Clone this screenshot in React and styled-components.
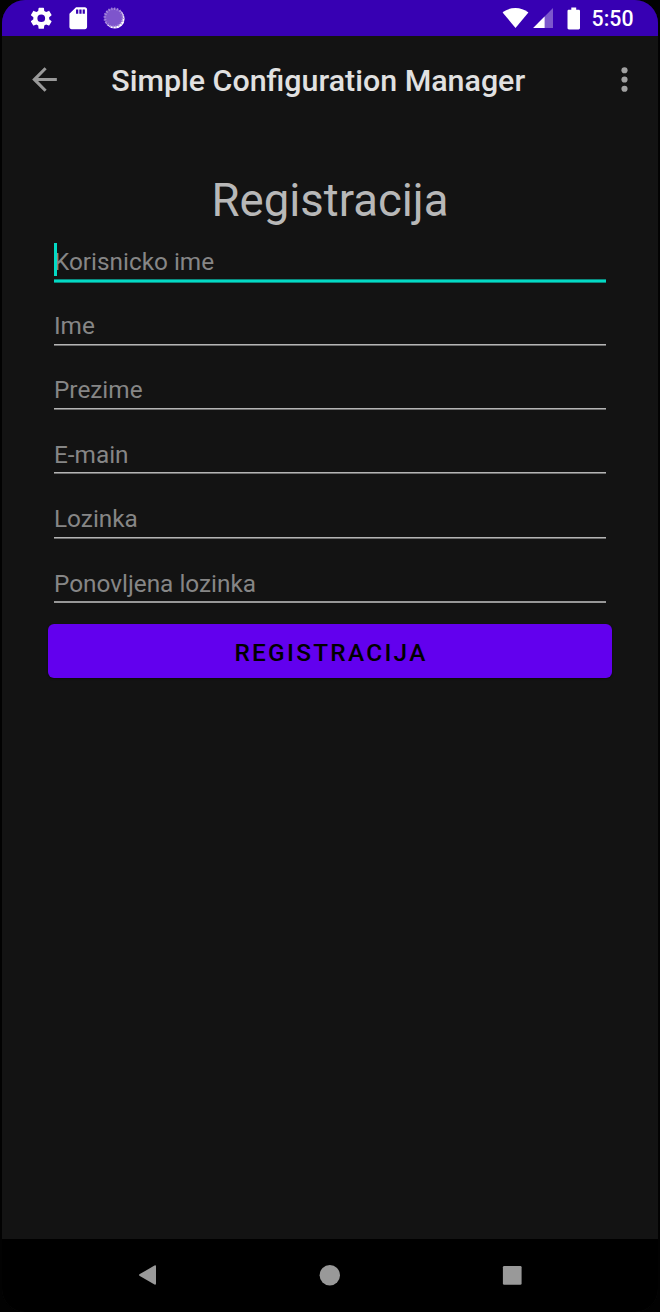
import React from 'react';
import styled, { createGlobalStyle } from 'styled-components';

const GlobalStyle = createGlobalStyle`
  * { box-sizing: border-box; }
  body {
    margin: 0;
    background: #020202;
    font-family: Roboto, "Liberation Sans", sans-serif;
  }
`;

const Device = styled.div`
  width: 656px;
  height: 1312px;
  margin: 0 auto;
  display: flex;
  flex-direction: column;
  overflow: hidden;
  border-radius: 23px;
  background: #131313;
`;

const StatusBar = styled.div`
  height: 36px;
  flex: none;
  display: flex;
  align-items: center;
  justify-content: space-between;
  padding: 0 24.5px 0 26px;
  background: #3700b3;
`;

const StatusGroup = styled.div`
  display: flex;
  align-items: center;
  height: 36px;
`;

const Icon = styled.svg`
  display: block;
  flex: none;
  margin-left: ${({ $gap }) => $gap || 0}px;
`;

const Clock = styled.span`
  margin-left: 11px;
  font-size: 21.3px;
  font-weight: 500;
  line-height: 36px;
  padding-top: 2px;
  color: #fff;
`;

const Toolbar = styled.header`
  height: 86px;
  flex: none;
  display: flex;
  align-items: center;
  padding: 0 15px 0 24px;
`;

const IconButton = styled.button`
  display: flex;
  padding: 0;
  border: 0;
  background: none;
`;

const AppTitle = styled.h1`
  flex: 1;
  margin: 0 0 0 48.3px;
  padding-top: 2px;
  font-size: 30.4px;
  font-weight: 500;
  line-height: 41px;
  color: #e1e1e1;
`;

const Form = styled.main`
  flex: 1;
  display: flex;
  flex-direction: column;
  padding: 52px 46px 0;
`;

const Heading = styled.h2`
  margin: 0 0 -0.3px;
  font-size: 45.5px;
  font-weight: 400;
  line-height: 53px;
  text-align: center;
  color: #b8b8b8;
`;

const Field = styled.label`
  position: relative;
  display: block;
  height: 64.37px;
  padding: 16px 6px 0;
`;

const Input = styled.input`
  display: block;
  width: 100%;
  height: 37px;
  padding: 0;
  border: 0;
  outline: 0;
  background: none;
  font-family: inherit;
  font-size: 24.35px;
  color: #b8b8b8;
  &::placeholder { color: #868686; opacity: 1; }
`;

const Underline = styled.div`
  height: ${({ $active }) => ($active ? 4 : 2)}px;
  margin-top: ${({ $active }) => ($active ? -0.7 : -0.35)}px;
  background: ${({ $active }) =>
    $active
      ? 'linear-gradient(#0a8a7e 1px, #03dac5 1px 3px, #0a8a7e 3px)'
      : 'linear-gradient(#b4b4b4 1px, #6c6c6c 1px)'};

  ${Field}:last-of-type & {
    background: #979797;
  }
`;

const Caret = styled.span`
  position: absolute;
  left: 6px;
  top: 16px;
  width: 3px;
  height: 33px;
  background: #03dac5;
`;

const SubmitButton = styled.button`
  height: 54px;
  margin-top: 11.08px;
  padding: 3px 0 0 2px;
  border: 0;
  border-radius: 6px;
  background: #6200ee;
  box-shadow: 0 1px 2px rgba(0, 0, 0, 0.5);
  font-family: inherit;
  font-size: 24.4px;
  font-weight: 500;
  letter-spacing: 2.27px;
  color: #000;
`;

const NavBar = styled.nav`
  height: 73px;
  flex: none;
  display: flex;
  align-items: center;
  justify-content: space-between;
  padding: 0 128px 1px;
  background: #000;
`;

const fields = ['Korisnicko ime', 'Ime', 'Prezime', 'E-main', 'Lozinka', 'Ponovljena lozinka'];

export default function App() {
  return (
    <>
      <GlobalStyle />
      <Device>
        <StatusBar>
          <StatusGroup>
            <Icon width="26.5" height="26.5" viewBox="0 0 24 24" fill="#fff">
              <path d="M19.14 12.94c.04-.3.06-.61.06-.94 0-.32-.02-.64-.07-.94l2.03-1.58c.18-.14.23-.41.12-.61l-1.92-3.32c-.12-.22-.37-.29-.59-.22l-2.39.96c-.5-.38-1.03-.7-1.62-.94l-.36-2.54c-.04-.24-.24-.41-.48-.41h-3.84c-.24 0-.43.17-.47.41l-.36 2.54c-.59.24-1.13.57-1.62.94l-2.39-.96c-.22-.08-.47 0-.59.22L2.74 8.87c-.12.21-.08.47.12.61l2.03 1.58c-.05.3-.09.63-.09.94s.02.64.07.94l-2.03 1.58c-.18.14-.23.41-.12.61l1.92 3.32c.12.22.37.29.59.22l2.39-.96c.5.38 1.03.7 1.62.94l.36 2.54c.05.24.24.41.48.41h3.84c.24 0 .44-.17.47-.41l.36-2.54c.59-.24 1.13-.56 1.62-.94l2.39.96c.22.08.47 0 .59-.22l1.92-3.32c.12-.22.07-.47-.12-.61l-2.01-1.58zM12 15.5A3.5 3.5 0 1 1 12 8.5a3.5 3.5 0 0 1 0 7z" />
            </Icon>
            <Icon $gap={10.3} width="26.5" height="26.5" viewBox="0 0 24 24" fill="#fff">
              <path d="M18 2h-8L4.02 8 4 20c0 1.1.9 2 2 2h12c1.1 0 2-.9 2-2V4c0-1.1-.9-2-2-2zm-6 6h-2V4h2v4zm3 0h-2V4h2v4zm3 0h-2V4h2v4z" />
            </Icon>
            <Icon $gap={10.5} width="24" height="24" viewBox="0 0 24 24">
              <circle cx="12.8" cy="12.7" r="9.8" fill="#fff" />
              <circle cx="11.5" cy="11.4" r="9.4" fill="#7e55cc" />
              <circle cx="11.8" cy="11.7" r="9" fill="none" stroke="#a98bdd" strokeWidth="2.6" strokeDasharray="1.1 1.73" />
            </Icon>
          </StatusGroup>
          <StatusGroup>
            <Icon width="27" height="22" viewBox="0 0 27 22" fill="#fff">
              <path d="M.6 5.4C8-.6 19-.6 26.4 5.4L13.5 21z" />
            </Icon>
            <Icon $gap={4} width="21" height="22" viewBox="0 0 21 22">
              <path d="M20 1v20H.2z" fill="#7c57cc" />
              <path d="M11.6 9.5V21H.2z" fill="#fff" />
            </Icon>
            <Icon $gap={13} width="14" height="23" viewBox="0 0 14 23" fill="#fff">
              <path d="M4.3.5h4.9v2.3h2.4c.8 0 1.4.5 1.4 1.3v17c0 .8-.6 1.4-1.4 1.4H1.9c-.8 0-1.4-.6-1.4-1.4v-17c0-.8.6-1.3 1.4-1.3h2.4z" />
            </Icon>
            <Clock>5:50</Clock>
          </StatusGroup>
        </StatusBar>
        <Toolbar>
          <IconButton aria-label="Back">
            <Icon width="37" height="37" viewBox="0 0 24 24" fill="#999">
              <path d="M20 11H7.83l5.59-5.59L12 4l-8 8 8 8 1.41-1.41L7.83 13H20v-2z" />
            </Icon>
          </IconButton>
          <AppTitle>Simple Configuration Manager</AppTitle>
          <IconButton aria-label="More options">
            <Icon width="37" height="37" viewBox="0 0 24 24" fill="#a1a1a1">
              <circle cx="12" cy="6" r="2" />
              <circle cx="12" cy="12" r="2" />
              <circle cx="12" cy="18" r="2" />
            </Icon>
          </IconButton>
        </Toolbar>
        <Form>
          <Heading>Registracija</Heading>
          {fields.map((label, i) => (
            <Field key={label}>
              {i === 0 && <Caret />}
              <Input placeholder={label} />
              <Underline $active={i === 0} />
            </Field>
          ))}
          <SubmitButton>REGISTRACIJA</SubmitButton>
        </Form>
        <NavBar>
          <Icon width="36" height="36" viewBox="0 0 36 36" fill="#999">
            <path d="M9.8 17.1 24.5 8.6q1.5-.8 1.5.8v17.2q0 1.6-1.5.8L9.8 18.9q-1.6-.9 0-1.8z" />
          </Icon>
          <Icon width="36" height="36" viewBox="0 0 36 36" fill="#999">
            <circle cx="17.8" cy="18.2" r="10.2" />
          </Icon>
          <Icon width="36" height="36" viewBox="0 0 36 36" fill="#999">
            <rect x="8.9" y="9" width="18.7" height="18.7" rx="1.3" />
          </Icon>
        </NavBar>
      </Device>
    </>
  );
}
